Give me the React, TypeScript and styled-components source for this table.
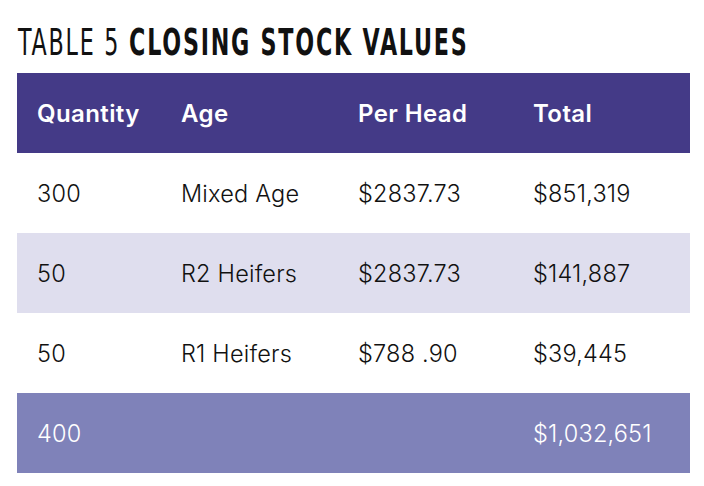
import * as React from "react";
import styled, { createGlobalStyle } from "styled-components";

const GlobalStyle = createGlobalStyle`
    html, body {
        margin: 0;
        padding: 0;
        background: #ffffff;
    }
`;

const Page = styled.div`
    width: 704px;
    height: 486px;
    padding: 22px 14px 0 17px;
    box-sizing: border-box;
`;

const Title = styled.h1`
    margin: 0 0 11px 1px;
    font-family: "DejaVu Sans", sans-serif;
    font-size: 38px;
    line-height: 40px;
    letter-spacing: 3px;
    color: #111111;
    font-weight: 400;
    white-space: nowrap;
    transform: scaleX(0.585);
    transform-origin: left center;
`;

const TitleStrong = styled.span`
    font-weight: 700;
`;

const Table = styled.div`
    width: 673px;
    display: flex;
    flex-direction: column;
`;

const rowColors = {
    head: "#443a87",
    plain: "#ffffff",
    shaded: "#dfdeee",
    total: "#7f82b9",
};

const Row = styled.div<{ $kind: keyof typeof rowColors }>`
    display: grid;
    grid-template-columns: 144px 177px 175px 1fr;
    align-items: center;
    height: 80px;
    padding: 0 20px;
    background: ${({ $kind }) => rowColors[$kind]};
    color: ${({ $kind }) => ($kind === "head" || $kind === "total" ? "#ffffff" : "#111111")};
    font-family: Inter, "Liberation Sans", sans-serif;
    font-size: ${({ $kind }) => ($kind === "head" ? "24px" : "23.5px")};
    font-weight: ${({ $kind }) => ($kind === "head" ? 600 : 300)};
    letter-spacing: ${({ $kind }) => ($kind === "head" ? "0.4px" : "0.2px")};
    white-space: nowrap;
`;

const Cell = styled.span``;

const rows = [
    { kind: "plain", cells: ["300", "Mixed Age", "$2837.73", "$851,319"] },
    { kind: "shaded", cells: ["50", "R2 Heifers", "$2837.73", "$141,887"] },
    { kind: "plain", cells: ["50", "R1 Heifers", "$788 .90", "$39,445"] },
    { kind: "total", cells: ["400", "", "", "$1,032,651"] },
] as const;

export default function App() {
    return (
        <>
            <GlobalStyle />
            <Page>
                <Title>
                    TABLE 5 <TitleStrong>CLOSING STOCK VALUES</TitleStrong>
                </Title>
                <Table>
                    <Row $kind="head">
                        <Cell>Quantity</Cell>
                        <Cell>Age</Cell>
                        <Cell>Per Head</Cell>
                        <Cell>Total</Cell>
                    </Row>
                    {rows.map((row, i) => (
                        <Row key={i} $kind={row.kind}>
                            {row.cells.map((c, j) => (
                                <Cell key={j}>{c}</Cell>
                            ))}
                        </Row>
                    ))}
                </Table>
            </Page>
        </>
    );
}
